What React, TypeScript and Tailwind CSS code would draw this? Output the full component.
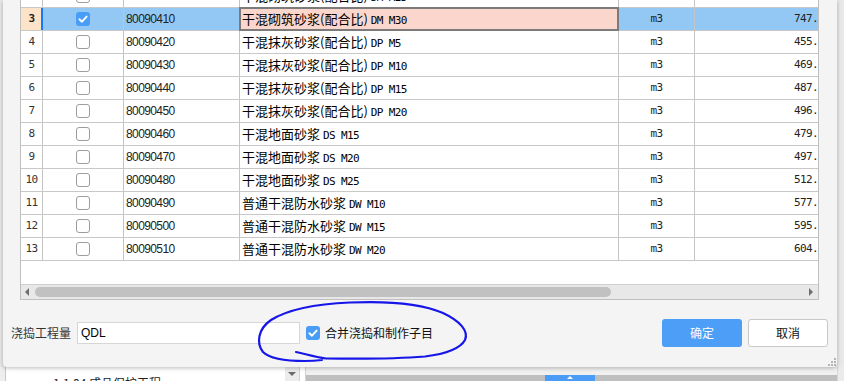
import React from 'react';

type Row = { n: number; code: string; cjk: string; lat: string; price: string };

const rows: Row[] = [
  { n: 2, code: '80090400', cjk: '干混砌筑砂浆(配合比) ', lat: 'DM M25', price: '698.' },
  { n: 3, code: '80090410', cjk: '干混砌筑砂浆(配合比) ', lat: 'DM M30', price: '747.' },
  { n: 4, code: '80090420', cjk: '干混抹灰砂浆(配合比) ', lat: 'DP M5', price: '455.' },
  { n: 5, code: '80090430', cjk: '干混抹灰砂浆(配合比) ', lat: 'DP M10', price: '469.' },
  { n: 6, code: '80090440', cjk: '干混抹灰砂浆(配合比) ', lat: 'DP M15', price: '487.' },
  { n: 7, code: '80090450', cjk: '干混抹灰砂浆(配合比) ', lat: 'DP M20', price: '496.' },
  { n: 8, code: '80090460', cjk: '干混地面砂浆 ', lat: 'DS M15', price: '479.' },
  { n: 9, code: '80090470', cjk: '干混地面砂浆 ', lat: 'DS M20', price: '497.' },
  { n: 10, code: '80090480', cjk: '干混地面砂浆 ', lat: 'DS M25', price: '512.' },
  { n: 11, code: '80090490', cjk: '普通干混防水砂浆 ', lat: 'DW M10', price: '577.' },
  { n: 12, code: '80090500', cjk: '普通干混防水砂浆 ', lat: 'DW M15', price: '595.' },
  { n: 13, code: '80090510', cjk: '普通干混防水砂浆 ', lat: 'DW M20', price: '604.' },
];

function Check({ on }: { on: boolean }) {
  if (on) {
    return (
      <div className="w-[14px] h-[14px] rounded-[3px] bg-[#4a9df6] flex items-center justify-center">
        <svg width="14" height="14" viewBox="0 0 14 14">
          <path d="M3.4 7.3 L6 9.7 L10.6 4.6" stroke="#fff" strokeWidth="1.9" fill="none" strokeLinecap="round" strokeLinejoin="round" />
        </svg>
      </div>
    );
  }
  return <div className="w-[14px] h-[14px] rounded-[3px] bg-white border border-[#9d9d9d]" />;
}

function TableRow({ r }: { r: Row }) {
  const sel = r.n === 3;
  const line = 'border-r border-[#c4c4c4]';
  const selBg = sel ? 'bg-[#93c8f5]' : 'bg-white';
  return (
    <div className="grid grid-cols-[22px_81px_116px_379px_76px_123px] h-[23px] shrink-0 border-b border-[#c8c8c8]">
      <div
        className={
          sel
            ? "flex items-center justify-center border-r border-[#1677ff] shadow-[inset_-1px_0_0_#1677ff] bg-[#fde3c8] font-['DejaVu_Sans_Mono',monospace] font-bold text-[11px] tracking-[-0.6px] text-[#222]"
            : "flex items-center justify-center border-r border-[#c4c4c4] font-['DejaVu_Sans_Mono',monospace] text-[11px] tracking-[-0.6px] text-[#333]"
        }
      >
        {r.n}
      </div>
      <div className={`flex items-center justify-center ${line} ${selBg}`}>
        <Check on={sel} />
      </div>
      <div className={`flex items-center pl-[2px] ${line} ${selBg} font-['Liberation_Sans',sans-serif] text-[12px] tracking-[-0.6px] text-[#222]`}>
        {r.code}
      </div>
      <div className={`relative flex items-center pl-[2px] ${line} ${sel ? 'bg-[#fbd6cd]' : 'bg-white'} text-black`}>
        {sel && <div className="absolute -left-[1px] -top-[1px] -right-[1px] -bottom-[1px] border-2 border-[#7b7b7b]" />}
        <div className="relative whitespace-pre leading-[16px]">
          <span className="font-['Noto_Sans_CJK_SC',sans-serif] text-[13px]">{r.cjk}</span>
          <span className="font-['DejaVu_Sans_Mono',monospace] text-[11px] tracking-[-0.6px]">{r.lat}</span>
        </div>
      </div>
      <div className={`flex items-center justify-center ${line} ${selBg} font-['DejaVu_Sans_Mono',monospace] text-[11px] tracking-[-0.6px] text-[#222]`}>
        m3
      </div>
      <div className={`flex items-center justify-end overflow-hidden ${selBg} font-['DejaVu_Sans_Mono',monospace] text-[11px] tracking-[-0.6px] text-[#222]`}>
        {r.price}
      </div>
    </div>
  );
}

export default function App() {
  return (
    <div className="relative w-[844px] h-[381px] overflow-hidden bg-[#e9e9e9] font-['Noto_Sans_CJK_SC',sans-serif]">
      {/* underlying window */}
      <div className="absolute inset-0 flex flex-col">
        <div className="flex-1" />
        <div className="h-[14px] flex">
          <div className="w-[5px] bg-[#eeeeee]" />
          <div className="w-[280px] bg-white border-l border-[#c6c6c6] overflow-hidden pl-[47px] pt-[8px]">
            <div className="text-[12px] leading-[16px] text-[#222] whitespace-nowrap">1.1.04 成品保护工程</div>
          </div>
          <div className="w-[14px] bg-[#ececec] flex justify-center pt-[5px]">
            <svg width="8" height="4" viewBox="0 0 8 4">
              <path d="M0 0 L8 0 L4 4 Z" fill="#6b6b6b" />
            </svg>
          </div>
          <div className="w-[7px] bg-white border-x border-[#d2d2d2]" />
          <div className="w-[531px] flex flex-col">
            <div className="h-[8px] bg-[#f0f0f0]" />
            <div className="flex-1 bg-[#bfbfbf] flex pl-[239px]">
              <div className="w-[50px] bg-[#4a9cf7] flex justify-center pt-[1px]">
                <svg width="6" height="3" viewBox="0 0 6 3">
                  <path d="M0 3 L3 0 L6 3 Z" fill="#fff" />
                </svg>
              </div>
            </div>
          </div>
          <div className="flex-1 bg-[#ebebeb] border-l border-[#d6d6d6]" />
        </div>
      </div>

      {/* dialog */}
      <div className="absolute left-[3px] top-0 w-[834px] h-[367px] bg-[#f4f4f4] rounded-b-[4px] shadow-[0_1px_4px_rgba(0,0,0,0.28)] flex flex-col">
        <div className="ml-[17px] w-[799px] h-[300px] shrink-0 flex flex-col overflow-hidden border-x border-b border-[#bfbfbf] bg-white">
          <div className="-mt-[15px] flex flex-col shrink-0">
            {rows.map((r) => (
              <TableRow key={r.n} r={r} />
            ))}
          </div>
          <div className="flex-1 bg-white" />
          <div className="h-[15px] shrink-0 border-t border-[#cfcfcf] bg-[#e8e8e8] flex items-center pl-[4px] pr-[5px]">
            <svg width="4" height="8" viewBox="0 0 4 8">
              <path d="M4 0 L0 4 L4 8 Z" fill="#6e6e6e" />
            </svg>
            <div className="ml-[6px] w-[576px] h-[10px] rounded-full bg-[#c1c1c1]" />
            <div className="flex-1" />
            <svg width="4" height="8" viewBox="0 0 4 8">
              <path d="M0 0 L4 4 L0 8 Z" fill="#6e6e6e" />
            </svg>
          </div>
        </div>

        <div className="mt-[19px] h-[28px] flex items-center pl-[8px] pr-[9px]">
          <span className="w-[60px] text-[12px] leading-[16px] text-[#333] whitespace-nowrap">浇捣工程量</span>
          <div className="ml-[6px] w-[223px] h-[22px] bg-white border border-[#d6d6d6] flex items-center pl-[3px] font-['Liberation_Sans',sans-serif] text-[12px] text-black">
            QDL
          </div>
          <div className="ml-[6px]">
            <Check on={true} />
          </div>
          <span className="ml-[5px] text-[12px] leading-[16px] text-[#111] whitespace-nowrap">合并浇捣和制作子目</span>
          <div className="flex-1" />
          <button className="w-[80px] h-[28px] rounded-[3px] bg-[#4d9ef7] text-white text-[12px] leading-[16px]">确定</button>
          <button className="ml-[6px] w-[80px] h-[28px] rounded-[3px] bg-white border border-[#c8c8c8] text-[#111] text-[12px] leading-[16px]">取消</button>
        </div>

        <svg className="absolute right-[1px] bottom-[1px]" width="9" height="9" viewBox="0 0 9 9">
          <rect x="7" y="1" width="2" height="2" fill="#b4b4b4" />
          <rect x="4" y="4" width="2" height="2" fill="#b4b4b4" />
          <rect x="7" y="4" width="2" height="2" fill="#b4b4b4" />
          <rect x="1" y="7" width="2" height="2" fill="#b4b4b4" />
          <rect x="4" y="7" width="2" height="2" fill="#b4b4b4" />
          <rect x="7" y="7" width="2" height="2" fill="#b4b4b4" />
        </svg>
      </div>

      {/* hand-drawn annotation */}
      <svg className="absolute inset-0 pointer-events-none" width="844" height="381" viewBox="0 0 844 381">
        <path
          d="M296 352 C306 354, 314 357, 326 358.5 C360 359, 400 358.5, 425 356.5 C445 354, 460 349, 465 340 C469 331, 460 321, 443 313 C420 303, 385 301, 350 302.5 C315 304, 287 310, 271 320 C258 329, 256 343, 263 352 C270 359, 285 361, 305 361 C312 361, 318 360.5, 322 360"
          stroke="#1616e8"
          strokeWidth="2.2"
          fill="none"
          strokeLinecap="round"
          strokeLinejoin="round"
        />
      </svg>
    </div>
  );
}
